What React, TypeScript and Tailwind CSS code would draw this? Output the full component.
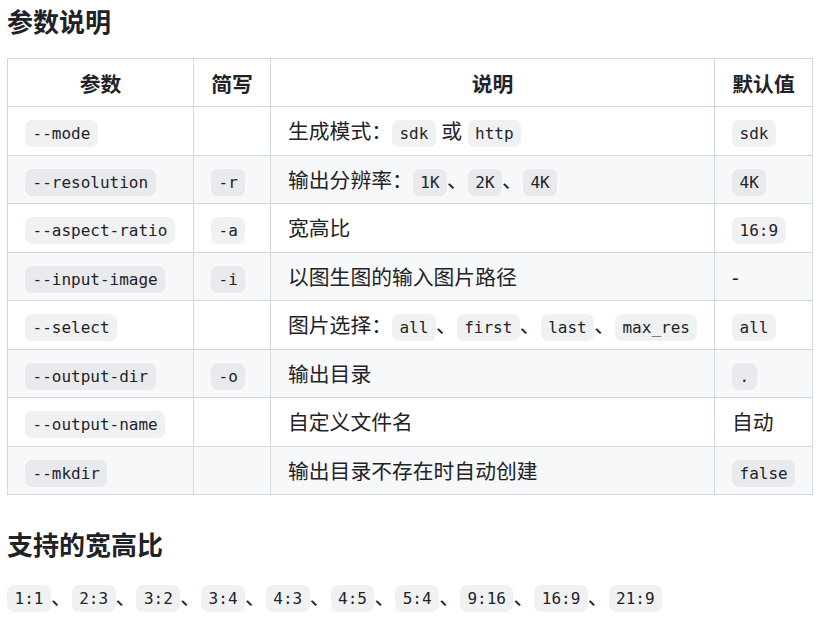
import React from 'react'

const rows: { name: string; short?: string; desc: React.ReactNode; def: React.ReactNode }[] = [
  { name: '--mode', desc: <>生成模式：<C>sdk</C> 或 <C>http</C></>, def: <C>sdk</C> },
  { name: '--resolution', short: '-r', desc: <>输出分辨率：<C>1K</C>、<C>2K</C>、<C>4K</C></>, def: <C>4K</C> },
  { name: '--aspect-ratio', short: '-a', desc: '宽高比', def: <C>16:9</C> },
  { name: '--input-image', short: '-i', desc: '以图生图的输入图片路径', def: '-' },
  {
    name: '--select',
    desc: <>图片选择：<C>all</C>、<C>first</C>、<C>last</C>、<C>max_res</C></>,
    def: <C>all</C>,
  },
  { name: '--output-dir', short: '-o', desc: '输出目录', def: <C>.</C> },
  { name: '--output-name', desc: '自定义文件名', def: '自动' },
  { name: '--mkdir', desc: '输出目录不存在时自动创建', def: <C>false</C> },
]

const ratios = ['1:1', '2:3', '3:2', '3:4', '4:3', '4:5', '5:4', '9:16', '16:9', '21:9']

function C({ children }: { children: React.ReactNode }) {
  return (
    <code className="inline-block h-[27px] rounded-[7px] bg-[#818b981f] px-[7.5px] align-middle whitespace-nowrap font-['DejaVu_Sans_Mono',monospace] text-[16px] leading-[27px]">
      {children}
    </code>
  )
}

export default function App() {
  return (
    <div className="min-h-screen bg-white px-[7px] pt-[6px] font-['Noto_Sans','Noto_Sans_CJK_SC',sans-serif] text-[20.8px] leading-[31.2px] text-[#1f2328]">
      <h2 className="text-[26px] leading-[32.5px] font-bold">参数说明</h2>

      <table className="mt-[19.5px] w-[805px] table-fixed border-collapse">
        <colgroup>
          <col className="w-[186px]" />
          <col className="w-[77px]" />
          <col className="w-[444px]" />
          <col className="w-[98px]" />
        </colgroup>
        <thead>
          <tr className="h-[48px] bg-white">
            {['参数', '简写', '说明', '默认值'].map((h) => (
              <th key={h} className="border border-[#d1d9e0] px-[17px] pt-[4px] pb-0 text-center font-bold">
                {h}
              </th>
            ))}
          </tr>
        </thead>
        <tbody>
          {rows.map((r, i) => (
            <tr key={r.name} className={i % 2 === 1 ? 'h-[48.5px] bg-[#f6f8fa]' : 'h-[48.5px] bg-white'}>
              <td className="border border-[#d1d9e0] px-[17px] pt-[2px] pb-0">
                <C>{r.name}</C>
              </td>
              <td className="border border-[#d1d9e0] px-[17px] pt-[2px] pb-0">{r.short && <C>{r.short}</C>}</td>
              <td className="border border-[#d1d9e0] px-[17px] pt-[2px] pb-0 whitespace-nowrap">{r.desc}</td>
              <td className="border border-[#d1d9e0] px-[17px] pt-[2px] pb-0">{r.def}</td>
            </tr>
          ))}
        </tbody>
      </table>

      <h2 className="mt-[34px] text-[26px] leading-[32.5px] font-bold">支持的宽高比</h2>
      <p className="mt-[20px]">
        {ratios.map((r, i) => (
          <React.Fragment key={r}>
            <C>{r}</C>
            {i < ratios.length - 1 && '、'}
          </React.Fragment>
        ))}
      </p>
    </div>
  )
}
